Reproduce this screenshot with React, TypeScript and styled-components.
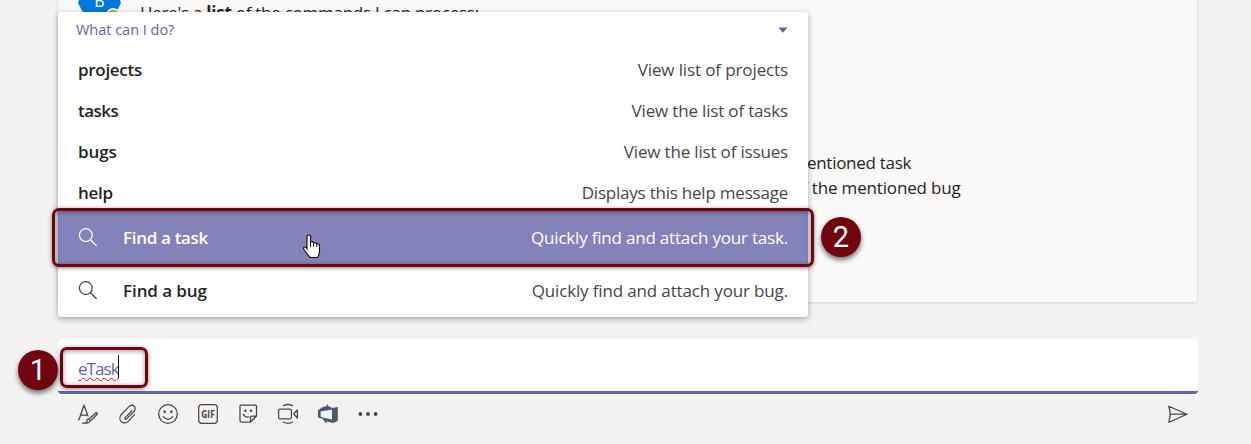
import React from "react";
import styled, { createGlobalStyle } from "styled-components";

const Global = createGlobalStyle`
  *{box-sizing:border-box}
  html,body{margin:0;height:444px;overflow:hidden;background:#f3f2f0}
  body{font-family:"Open Sans","Noto Sans",sans-serif;font-size:17px;color:#252423}
`;

const Page = styled.main`
  position:relative;width:1251px;height:444px;overflow:hidden;
  padding:0 53px 0 58px;display:flex;flex-direction:column;
`;
const Card = styled.section`
  position:relative;height:302px;width:1139px;flex:none;background:#faf9f8;
  border-radius:0 0 4px 4px;box-shadow:0 1px 3px rgba(0,0,0,.14);
  display:flex;padding-left:20px;
`;
const Avatar = styled.svg`width:48px;height:24px;flex:none;`;
const Message = styled.div`padding-left:14px;line-height:25px;`;
const Line = styled.div<{ $indent?: number; $top?: number; $ls?: number }>`
  white-space:nowrap;height:25px;
  padding-left:${p => p.$indent ?? 0}px;
  margin-top:${p => p.$top ?? 0}px;
  letter-spacing:${p => p.$ls ?? 0}px;
`;
const Popup = styled.div`
  position:absolute;left:58px;top:12px;width:750px;height:305px;background:#fff;
  border-radius:3px;box-shadow:0 2px 6px rgba(0,0,0,.32);overflow:visible;
`;
const PopupHead = styled.header`
  height:37px;padding:0 20px 2px 18px;display:flex;align-items:center;justify-content:space-between;
  color:#6264a7;font-size:14.5px;
`;
const Text = styled.span<{ $ls?: number }>`letter-spacing:${p => p.$ls ?? 0}px;white-space:nowrap;`;
const Name = styled(Text)`font-weight:600;`;
const Desc = styled(Text)`margin-left:auto;color:#484644;`;
const Command = styled.div`height:41px;padding:0 20px;display:flex;align-items:center;`;
const Search = styled.div<{ $active?: boolean }>`
  height:53px;padding:0 20px;display:flex;align-items:center;
  background:${p => (p.$active ? "#8383ba" : "transparent")};
  color:${p => (p.$active ? "#fff" : "#252423")};
  margin-top:${p => (p.$active ? -2 : 0)}px;
  ${Desc}{color:${p => (p.$active ? "#fff" : "#484644")};}
  svg{width:20px;height:20px;margin-right:25px;color:${p => (p.$active ? "#fff" : "#484644")};}
`;
const Compose = styled.div`
  margin-top:37px;height:55px;width:1140px;flex:none;background:#fff;border-bottom:3px solid #6264a7;
  border-radius:4px;padding:7px 20px 0;display:flex;align-items:center;color:#6264a7;
`;
const Typed = styled.span`
  letter-spacing:-.95px;line-height:22px;width:40px;white-space:nowrap;
  text-decoration:underline wavy #f00 1.3px;text-underline-offset:2px;text-decoration-skip-ink:none;
`;
const Caret = styled.i`width:1px;height:23px;background:#111;margin-bottom:5px;`;
const Toolbar = styled.div`
  height:40px;width:1140px;padding:0 10px 0 20px;display:flex;align-items:center;gap:20px;color:#484644;
  svg{width:20px;height:20px;overflow:visible;flex:none;}
  svg:last-child{margin-left:auto;}
`;
const Frame = styled.div<{ $x: number; $y: number; $w: number; $h: number }>`
  position:absolute;left:${p => p.$x}px;top:${p => p.$y}px;width:${p => p.$w}px;height:${p => p.$h}px;
  border:3px solid #70040f;border-radius:7px;
  box-shadow:0 1px 4px rgba(0,0,0,.5),inset 0 1px 5px rgba(0,0,0,.42);
`;
const Badge = styled.div<{ $x: number; $y: number }>`
  position:absolute;left:${p => p.$x}px;top:${p => p.$y}px;width:40px;height:40px;border-radius:50%;
  background:#70040f;color:#fff;font:29px/41px Roboto,Arial,sans-serif;text-align:center;
  box-shadow:0 3px 5px rgba(0,0,0,.55);
`;
const Pointer = styled.svg`position:absolute;left:302px;top:234px;width:20px;height:26px;`;

const line = { fill: "none", stroke: "currentColor", strokeWidth: 1.25, strokeLinecap: "round", strokeLinejoin: "round" } as const;

const Magnifier = () => (
  <svg viewBox="0 0 20 20" {...line}><circle cx="7.8" cy="7.1" r="6.4" /><path d="M12.4 11.7 18.2 17.5" /></svg>
);

const commands = [
  { name: "projects", nls: -0.3, desc: "View list of projects", dls: -0.12 },
  { name: "tasks", nls: -0.5, desc: "View the list of tasks", dls: -0.17 },
  { name: "bugs", nls: -0.1, desc: "View the list of issues", dls: -0.17 },
  { name: "help", nls: -0.3, desc: "Displays this help message", dls: -0.22 },
];

export default function App() {
  return (
    <Page>
      <Global />
      <Card>
        <Avatar viewBox="0 0 48 24">
          <path d="M4-9Q6-13 10-13H33Q37-13 39-9L42 0Q43.5 3 42 5L36 16Q34 19 30 19H13Q9 19 7 16L1 5Q-.5 3 1 0Z" fill="#0078de" />
          <text x="21.3" y="7.3" fill="#fff" fontSize="16" textAnchor="middle" fontFamily="Open Sans">B</text>
          <circle cx="35" cy="15" r="7" fill="#faf9f8" /><circle cx="35" cy="15" r="5.6" fill="#92c353" />
        </Avatar>
        <Message>
          <Line $ls={-0.26}>Here's a <b>list</b> of the commands I can process:</Line>
          <Line $top={125} $indent={651.5} $ls={-0.28}>mentioned task</Line>
          <Line $indent={652} $ls={-0.17}>of the mentioned bug</Line>
        </Message>
      </Card>
      <Compose><Typed>eTask</Typed><Caret /></Compose>
      <Toolbar>
        <svg viewBox="0 0 20 20" {...line}><path d="M.8 16 6 1.2 10 12M2.6 11H8.7M4.5 19H9Q12 19 11.8 16.6Q11.5 14.5 9.7 15.2Q8.5 15.8 9 17.5Q8.5 18.6 7 19M11 15 18 8.7Q19.6 8.3 19.3 10L13 16.5" /></svg>
        <svg viewBox="0 0 20 20" {...line}><path d="M13 6.3 6.3 13.2C5.3 14.2 6.6 15.6 7.7 14.5L14.9 7.3C16.6 5.5 16.6 3.2 15.2 1.9S11.5.7 9.8 2.5L2.7 9.9C.6 12 .4 15.2 2.3 17.2S7.4 18.9 9.5 16.7L15.7 10.2" transform="translate(.9 .4)" /></svg>
        <svg viewBox="0 0 20 20" {...line}><circle cx="10" cy="10" r="9.3" /><path d="M5.2 12.7Q10 18 14.8 12.7" /><circle cx="6.6" cy="7.7" r=".7" fill="currentColor" /><circle cx="13.4" cy="7.7" r=".7" fill="currentColor" /></svg>
        <svg viewBox="0 0 20 20" {...line}><rect x=".7" y=".7" width="18.6" height="18.6" rx="3" /><text x="10" y="13.9" textAnchor="middle" fontSize="10.5" fontWeight="700" fill="currentColor" stroke="none" textLength="13.5" lengthAdjust="spacingAndGlyphs">GIF</text></svg>
        <svg viewBox="0 0 20 20" {...line}><path d="M2.7 1H17.5Q18.5 1 18.5 2V12L12.5 18H3.5Q2 18 2 16.5V2Q2 1 2.7 1ZM18.5 12H14Q12.5 12 12.5 13.5V18M5.3 10.2Q7.2 13.8 11 13" /><circle cx="7.3" cy="6.7" r=".6" fill="currentColor" /><circle cx="13" cy="6.7" r=".6" fill="currentColor" /></svg>
        <svg viewBox="0 0 20 20" {...line}><rect x=".6" y="5" width="12.8" height="9.8" rx="1.5" /><path d="M15.7 9.8 19.4 6V14ZM5.5 1.8Q10 -.8 14.5 1.8M5.5 18Q10 20.6 14.5 18" /></svg>
        <svg viewBox="0 0 20 20" fill="#4b5a70"><path fillRule="evenodd" d="M0 6.2 3.5 3.7 8.4 2 9.6 0 10.5 2.3 14.5 4 19.8 3V16.8L15.4 19 8.3 17.5V20L4.6 14.8 0 13.6ZM2.6 7.5V12.5L4.5 13.6 14 15.6V5.5Z" /></svg>
        <svg viewBox="0 0 20 20" fill="currentColor"><circle cx="2.4" cy="10" r="1.9" /><circle cx="10" cy="10" r="1.9" /><circle cx="17.6" cy="10" r="1.9" /></svg>
        <svg viewBox="0 0 20 20" {...line}><path d="M.8 2.3 19 10.2.8 18.2Q3.5 10.2.8 2.3ZM2.3 10.2H19" /></svg>
      </Toolbar>
      <Popup>
        <PopupHead><Text $ls={-0.02}>What can I do?</Text><svg width="10" height="6" viewBox="0 0 10 6"><path d="M.4.5H9.6L5 5.7Z" fill="#6264a7" /></svg></PopupHead>
        {commands.map(c => (
          <Command key={c.name}><Name $ls={c.nls}>{c.name}</Name><Desc $ls={c.dls}>{c.desc}</Desc></Command>
        ))}
        <Search $active><Magnifier /><Name $ls={-0.32}>Find a task</Name><Desc $ls={-0.2}>Quickly find and attach your task.</Desc></Search>
        <Search><Magnifier /><Name $ls={-0.08}>Find a bug</Name><Desc $ls={-0.15}>Quickly find and attach your bug.</Desc></Search>
      </Popup>
      <Frame $x={52} $y={208} $w={762} $h={59} />
      <Frame $x={60} $y={347} $w={88} $h={41} />
      <Badge $x={821} $y={217}>2</Badge>
      <Badge $x={18} $y={350}>1</Badge>
      <Pointer viewBox="0 0 20 26"><path d="M5 3Q5 1 6.8 1T8.5 3V8Q10.8 7.2 11.6 8.8 13.8 8 14.8 9.8 17.5 9.5 17.5 12V17Q17.5 20 15.8 23.5H8Q5 20 2 15.5 1 13.5 2.5 13 3.8 12.8 5 14.7Z" fill="#fff" stroke="#111" strokeWidth="1.2" /><path d="M8.5 8V13M11.6 9V13M14.7 10V13" stroke="#111" /></Pointer>
    </Page>
  );
}
